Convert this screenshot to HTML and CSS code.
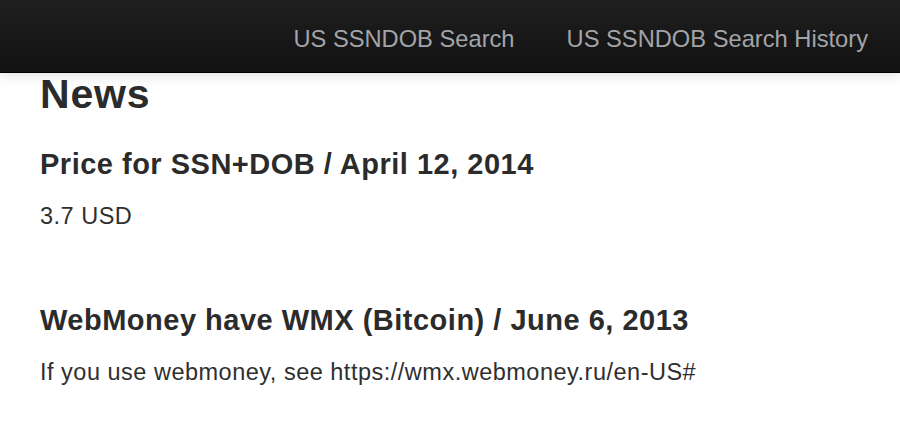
FILE: index.html
```html
<!DOCTYPE html>
<html lang="en">
<head>
<meta charset="utf-8">
<title>News</title>
<link rel="stylesheet" href="styles.css">
</head>
<body>
<header class="navbar">
  <nav class="nav">
    <a class="nav-link" href="#">US SSNDOB Search</a>
    <a class="nav-link" href="#">US SSNDOB Search History</a>
  </nav>
</header>
<main class="content">
  <h1 class="page-title">News</h1>
  <article class="news-item">
    <h2 class="news-title">Price for SSN+DOB / April 12, 2014</h2>
    <p class="news-text">3.7 USD</p>
  </article>
  <article class="news-item">
    <h2 class="news-title">WebMoney have WMX (Bitcoin) / June 6, 2013</h2>
    <p class="news-text">If you use webmoney, see https://wmx.webmoney.ru/en-US#</p>
  </article>
</main>
</body>
</html>
```

FILE: styles.css
```css
html, body {
  margin: 0;
  padding: 0;
  background: #ffffff;
}

body {
  font-family: "Liberation Sans", Arial, Helvetica, sans-serif;
  color: #2f2f2f;
}

.navbar {
  height: 72px;
  background: linear-gradient(#1f1f1f, #111111);
  border-bottom: 1px solid #000000;
  box-shadow: 0 3px 12px rgba(0, 0, 0, 0.12);
  position: relative;
  z-index: 1;
}

.nav {
  display: flex;
  justify-content: flex-end;
  padding-right: 6px;
  height: 72px;
}

.nav-link {
  display: block;
  padding: 6px 26px 0;
  line-height: 66px;
  font-size: 23.7px;
  color: #a2a4a8;
  text-decoration: none;
}

.content {
  padding: 0 40px;
}

.page-title {
  margin: 0;
  font-size: 41px;
  line-height: 43px;
  letter-spacing: 0.8px;
  font-weight: bold;
  color: #2b2b2b;
}

.news-item {
  display: flex;
  flex-direction: column;
  gap: 20px;
}

.page-title + .news-item {
  margin-top: 31px;
}

.news-item + .news-item {
  margin-top: 72px;
}

.news-title {
  margin: 0;
  font-size: 29px;
  line-height: 34px;
  letter-spacing: 0.5px;
  font-weight: bold;
  color: #2b2b2b;
}

.news-text {
  margin: 0;
  font-size: 23.5px;
  line-height: 30px;
  letter-spacing: 0.5px;
  color: #2f2f2f;
}
```
